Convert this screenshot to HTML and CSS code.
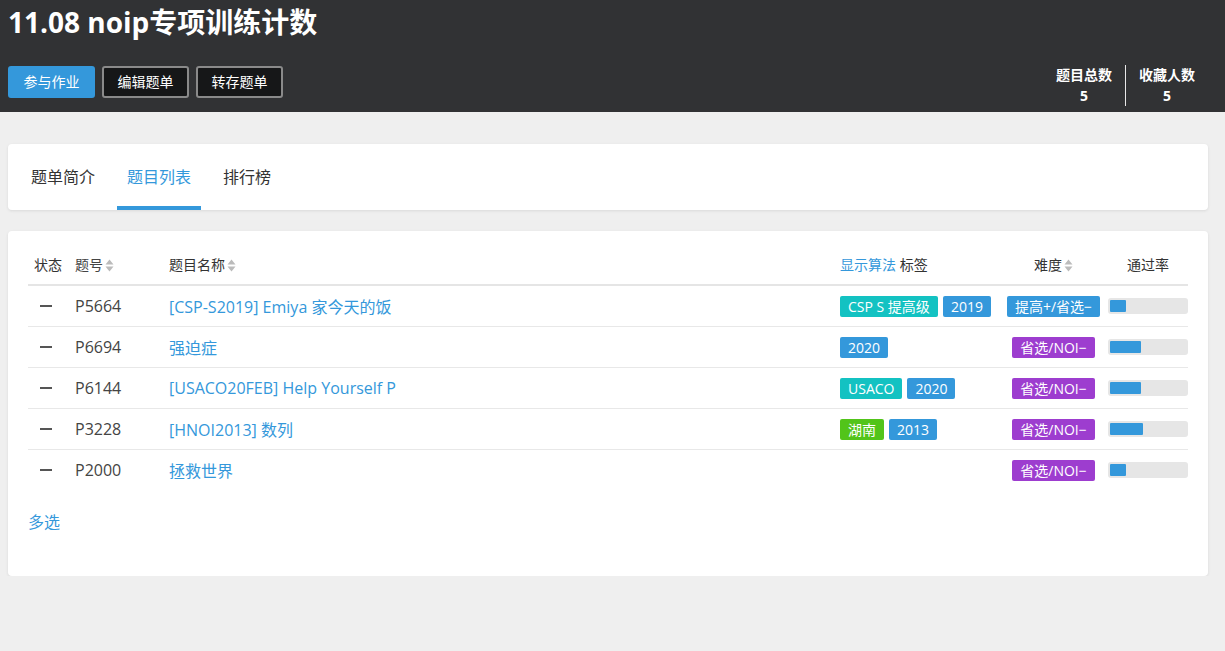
FILE: index.html
```html
<!DOCTYPE html>
<html lang="zh-CN">
<head>
<meta charset="utf-8">
<title>11.08 noip专项训练计数</title>
<link rel="stylesheet" href="styles.css">
</head>
<body>
<header class="top">
  <h1 class="title">11.08 noip专项训练计数</h1>
  <div class="top-row">
    <div class="actions">
      <button class="btn btn-primary">参与作业</button>
      <button class="btn btn-dark">编辑题单</button>
      <button class="btn btn-dark">转存题单</button>
    </div>
    <div class="stats">
      <div class="stat"><div class="stat-label">题目总数</div><div class="stat-val">5</div></div>
      <div class="stat stat-sep"><div class="stat-label">收藏人数</div><div class="stat-val">5</div></div>
    </div>
  </div>
</header>

<main class="main">
  <section class="card tabs-card">
    <nav class="tabs">
      <a class="tab">题单简介</a>
      <a class="tab tab-active">题目列表</a>
      <a class="tab">排行榜</a>
    </nav>
  </section>

  <section class="card list-card">
    <div class="row row-head">
      <div class="c-status">状态</div>
      <div class="c-pid">题号<svg class="sort" viewBox="0 0 9 13" width="9" height="13"><path d="M4.5 0.5L8.5 5.5H0.5z M0.5 7.5h8l-4 5z" fill="#bbb"/></svg></div>
      <div class="c-name">题目名称<svg class="sort" viewBox="0 0 9 13" width="9" height="13"><path d="M4.5 0.5L8.5 5.5H0.5z M0.5 7.5h8l-4 5z" fill="#bbb"/></svg></div>
      <div class="c-tags"><a class="link">显示算法</a> 标签</div>
      <div class="c-diff">难度<svg class="sort" viewBox="0 0 9 13" width="9" height="13"><path d="M4.5 0.5L8.5 5.5H0.5z M0.5 7.5h8l-4 5z" fill="#bbb"/></svg></div>
      <div class="c-rate">通过率</div>
    </div>

    <div class="row">
      <div class="c-status"><span class="dash"></span></div>
      <div class="c-pid">P5664</div>
      <div class="c-name"><a class="link">[CSP-S2019] Emiya 家今天的饭</a></div>
      <div class="c-tags"><span class="tag tag-teal">CSP S 提高级</span><span class="tag tag-blue">2019</span></div>
      <div class="c-diff"><span class="tag tag-blue">提高+/省选−</span></div>
      <div class="c-rate"><div class="bar"><div class="bar-fill" style="width:21%"></div></div></div>
    </div>

    <div class="row">
      <div class="c-status"><span class="dash"></span></div>
      <div class="c-pid">P6694</div>
      <div class="c-name"><a class="link">强迫症</a></div>
      <div class="c-tags"><span class="tag tag-blue">2020</span></div>
      <div class="c-diff"><span class="tag tag-purple">省选/NOI−</span></div>
      <div class="c-rate"><div class="bar"><div class="bar-fill" style="width:41%"></div></div></div>
    </div>

    <div class="row">
      <div class="c-status"><span class="dash"></span></div>
      <div class="c-pid">P6144</div>
      <div class="c-name"><a class="link">[USACO20FEB] Help Yourself P</a></div>
      <div class="c-tags"><span class="tag tag-teal">USACO</span><span class="tag tag-blue">2020</span></div>
      <div class="c-diff"><span class="tag tag-purple">省选/NOI−</span></div>
      <div class="c-rate"><div class="bar"><div class="bar-fill" style="width:41%"></div></div></div>
    </div>

    <div class="row">
      <div class="c-status"><span class="dash"></span></div>
      <div class="c-pid">P3228</div>
      <div class="c-name"><a class="link">[HNOI2013] 数列</a></div>
      <div class="c-tags"><span class="tag tag-green">湖南</span><span class="tag tag-blue">2013</span></div>
      <div class="c-diff"><span class="tag tag-purple">省选/NOI−</span></div>
      <div class="c-rate"><div class="bar"><div class="bar-fill" style="width:44%"></div></div></div>
    </div>

    <div class="row row-last">
      <div class="c-status"><span class="dash"></span></div>
      <div class="c-pid">P2000</div>
      <div class="c-name"><a class="link">拯救世界</a></div>
      <div class="c-tags"></div>
      <div class="c-diff"><span class="tag tag-purple">省选/NOI−</span></div>
      <div class="c-rate"><div class="bar"><div class="bar-fill" style="width:21%"></div></div></div>
    </div>

    <div class="multi"><a class="link">多选</a></div>
  </section>
</main>
</body>
</html>
```

FILE: styles.css
```css
* { box-sizing: border-box; }

html, body {
  margin: 0;
  padding: 0;
}

body {
  background: #efefef;
  color: #333;
  font-family: "Open Sans", "Noto Sans CJK SC", sans-serif;
  font-size: 14px;
}

/* ---------- header ---------- */
.top {
  background: #313234;
  color: #fff;
  padding: 2px 17px 6px 8px;
  height: 112px;
}

.title {
  margin: 0;
  font-size: 28px;
  line-height: 40px;
  font-weight: bold;
}

.top-row {
  margin-top: 23px;
  display: flex;
  justify-content: space-between;
  align-items: flex-start;
}

.actions {
  display: flex;
  gap: 7px;
  margin-top: 1px;
}

.btn {
  font: inherit;
  font-size: 14px;
  height: 32px;
  padding: 0 13.5px;
  border-radius: 3px;
  border: 2px solid transparent;
  color: #fff;
  cursor: pointer;
  line-height: 28px;
}

.btn-primary {
  background: #3498db;
  border-color: #3498db;
}

.btn-dark {
  background: #161718;
  border-color: #8a8a8a;
}

.stats {
  display: flex;
}

.stat {
  padding: 0 13px;
  height: 41px;
  text-align: center;
  font-weight: bold;
}

.stat-sep {
  border-left: 1px solid #e8e8e8;
}

.stat-label {
  line-height: 20px;
  font-size: 14px;
}

.stat-val {
  line-height: 22px;
  font-size: 14px;
}

/* ---------- cards ---------- */
.main {
  padding: 32px 0 0 8px;
}

.card {
  width: 1200px;
  background: #fff;
  border-radius: 4px;
  box-shadow: 0 1px 3px rgba(26, 26, 26, 0.1);
}

.tabs-card {
  height: 66px;
  padding: 0 13px;
}

.tabs {
  display: flex;
  gap: 12px;
  height: 100%;
}

.tab {
  display: flex;
  align-items: center;
  padding: 0 10px;
  height: 66px;
  font-size: 16px;
  color: #333;
  border-bottom: 4px solid transparent;
  padding-top: 2px;
}

.tab-active {
  color: #3498db;
  border-bottom-color: #3498db;
}

.list-card {
  margin-top: 21px;
  padding: 20px 20px 20px 20px;
}

.link {
  color: #3498db;
  text-decoration: none;
}

/* ---------- table ---------- */
.row {
  display: grid;
  grid-template-columns: 40px 94px 1fr 173px 95px 87px;
  align-items: center;
  height: 41px;
  border-bottom: 1px solid #e8e8e8;
  font-size: 16px;
}

.row-head {
  height: 35px;
  font-size: 14px;
  line-height: 28px;
  padding-bottom: 5px;
  border-bottom: 2px solid #e5e5e5;
  align-items: start;
}

.row-last {
  border-bottom: none;
  height: 40px;
}

.c-status { text-align: center; }
.c-pid { padding-left: 7px; color: #444; }
.c-name { padding-left: 7px; }
.c-tags { padding-left: 7px; display: flex; gap: 5px; align-items: center; }
.row-head .c-tags { display: block; }
.c-diff { text-align: center; }
.c-rate { padding-left: 7px; }
.row-head .c-rate { text-align: center; }

.row-head .c-pid,
.row-head .c-name,
.row-head .c-diff {
  display: flex;
  align-items: center;
  gap: 2px;
}

.row-head .c-diff { justify-content: center; }

.sort {
  display: block;
  margin-top: 1px;
}

.dash {
  display: block;
  width: 12px;
  height: 2px;
  background: #555;
  margin-left: 12px;
}

.tag {
  display: inline-block;
  height: 21px;
  line-height: 21px;
  padding: 0 8px;
  border-radius: 2px;
  color: #fff;
  font-size: 14px;
  white-space: nowrap;
}

.tag-teal { background: #13c2c2; }
.tag-blue { background: #3498db; }
.tag-purple { background: #9d3dcf; }
.tag-green { background: #52c41a; }

.bar {
  height: 16px;
  background: #e6e6e6;
  border-radius: 3px;
  padding: 2px;
}

.bar-fill {
  height: 12px;
  background: #3498db;
  border-radius: 1px;
}

.multi {
  padding: 20px 0 22px 0;
  font-size: 16px;
  line-height: 24px;
}
```
